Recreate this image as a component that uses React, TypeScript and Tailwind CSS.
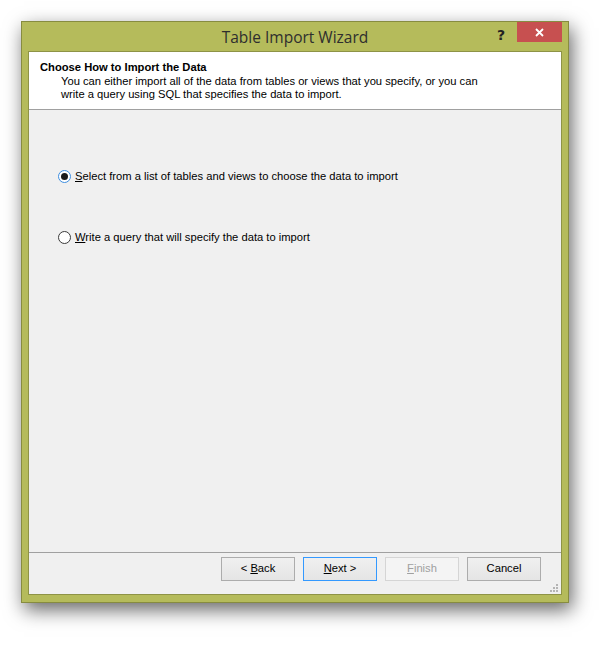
import React from "react";

function Radio({ checked }: { checked: boolean }) {
  return checked ? (
    <div className="w-[13px] h-[13px] rounded-full border border-[#3d8ee0] bg-white flex items-center justify-center shrink-0">
      <div className="w-[7px] h-[7px] rounded-full bg-[#1a1a1a]" />
    </div>
  ) : (
    <div className="w-[13px] h-[13px] rounded-full border border-[#3a3a3a] bg-white shrink-0" />
  );
}

function Btn({
  children,
  variant = "normal",
}: {
  children: React.ReactNode;
  variant?: "normal" | "default" | "disabled";
}) {
  const cls =
    variant === "default"
      ? "border-[#3399ff] bg-gradient-to-b from-[#f0f0f0] to-[#e5e5e5] text-black"
      : variant === "disabled"
      ? "border-[#d5d5d5] bg-[#f4f4f4] text-[#a0a0a0]"
      : "border-[#acacac] bg-gradient-to-b from-[#f0f0f0] to-[#e5e5e5] text-black";
  return (
    <div
      className={`w-[74px] h-[24px] border flex items-center justify-center text-[11.2px] leading-none ${cls}`}
    >
      {children}
    </div>
  );
}

export default function App() {
  return (
    <div
      className="w-[611px] h-[645px] bg-white pt-[21px] pl-[21px]"
      style={{ fontFamily: '"Liberation Sans", Arial, sans-serif' }}
    >
      <div className="w-[548px] h-[582px] border border-[#878c40] bg-[#b5bb5b] flex flex-col shadow-[3px_7px_18px_rgba(0,0,0,0.6)]">
        {/* Title bar */}
        <div className="relative h-[29px] flex items-center justify-center shrink-0">
          <span
            className="text-[15.5px] text-[#2e2e2e] pt-[2px]"
            style={{ fontFamily: '"Open Sans", "Noto Sans", sans-serif' }}
          >
            Table Import Wizard
          </span>
          <span className="absolute right-[63px] top-[3px] text-[14px] font-bold text-[#222]" style={{ fontFamily: '"DejaVu Sans", sans-serif' }}>
            ?
          </span>
          <div className="absolute right-[6px] top-0 w-[45px] h-[20px] bg-[#c75050] flex items-center justify-center">
            <svg width="9" height="9" viewBox="0 0 9 9">
              <path d="M1 1 L8 8 M8 1 L1 8" stroke="white" strokeWidth="1.8" />
            </svg>
          </div>
        </div>
        {/* Client area */}
        <div className="mx-[6px] border border-[#8e9346] bg-[#f0f0f0] flex-1 flex flex-col relative">
          {/* Header */}
          <div className="bg-white h-[58px] border-b border-[#a0a0a0] pt-[9px] pl-[11px] text-[11.2px] leading-[13.5px] text-black shrink-0">
            <div className="font-bold">Choose How to Import the Data</div>
            <div className="pl-[21px]">
              <div>You can either import all of the data from tables or views that you specify, or you can</div>
              <div>write a query using SQL that specifies the data to import.</div>
            </div>
          </div>
          {/* Options */}
          <div className="flex-1 flex flex-col pl-[29px] pt-[60px] text-[11.2px] text-black">
            <div className="flex items-center gap-[4px] h-[13px]">
              <Radio checked />
              <span>
                <span className="underline">S</span>elect from a list of tables and views to choose the data to import
              </span>
            </div>
            <div className="flex items-center gap-[4px] h-[13px] mt-[48px]">
              <Radio checked={false} />
              <span>
                <span className="underline">W</span>rite a query that will specify the data to import
              </span>
            </div>
          </div>
          {/* Buttons */}
          <div className="border-t border-[#a0a0a0] h-[42px] shrink-0 flex justify-end gap-[8px] pt-[4px] pr-[20px]">
            <Btn>
              &lt;&nbsp;<span className="underline">B</span>ack
            </Btn>
            <Btn variant="default">
              <span className="underline">N</span>ext&nbsp;&gt;
            </Btn>
            <Btn variant="disabled">
              <span className="underline">F</span>inish
            </Btn>
            <Btn>Cancel</Btn>
          </div>
          <svg className="absolute right-[2px] bottom-[1px]" width="10" height="10" viewBox="0 0 10 10">
            <g fill="#b4b4b4">
              <rect x="7" y="1" width="2" height="2" />
              <rect x="4" y="4" width="2" height="2" />
              <rect x="7" y="4" width="2" height="2" />
              <rect x="1" y="7" width="2" height="2" />
              <rect x="4" y="7" width="2" height="2" />
              <rect x="7" y="7" width="2" height="2" />
            </g>
          </svg>
        </div>
        <div className="h-[7px] shrink-0" />
      </div>
    </div>
  );
}
